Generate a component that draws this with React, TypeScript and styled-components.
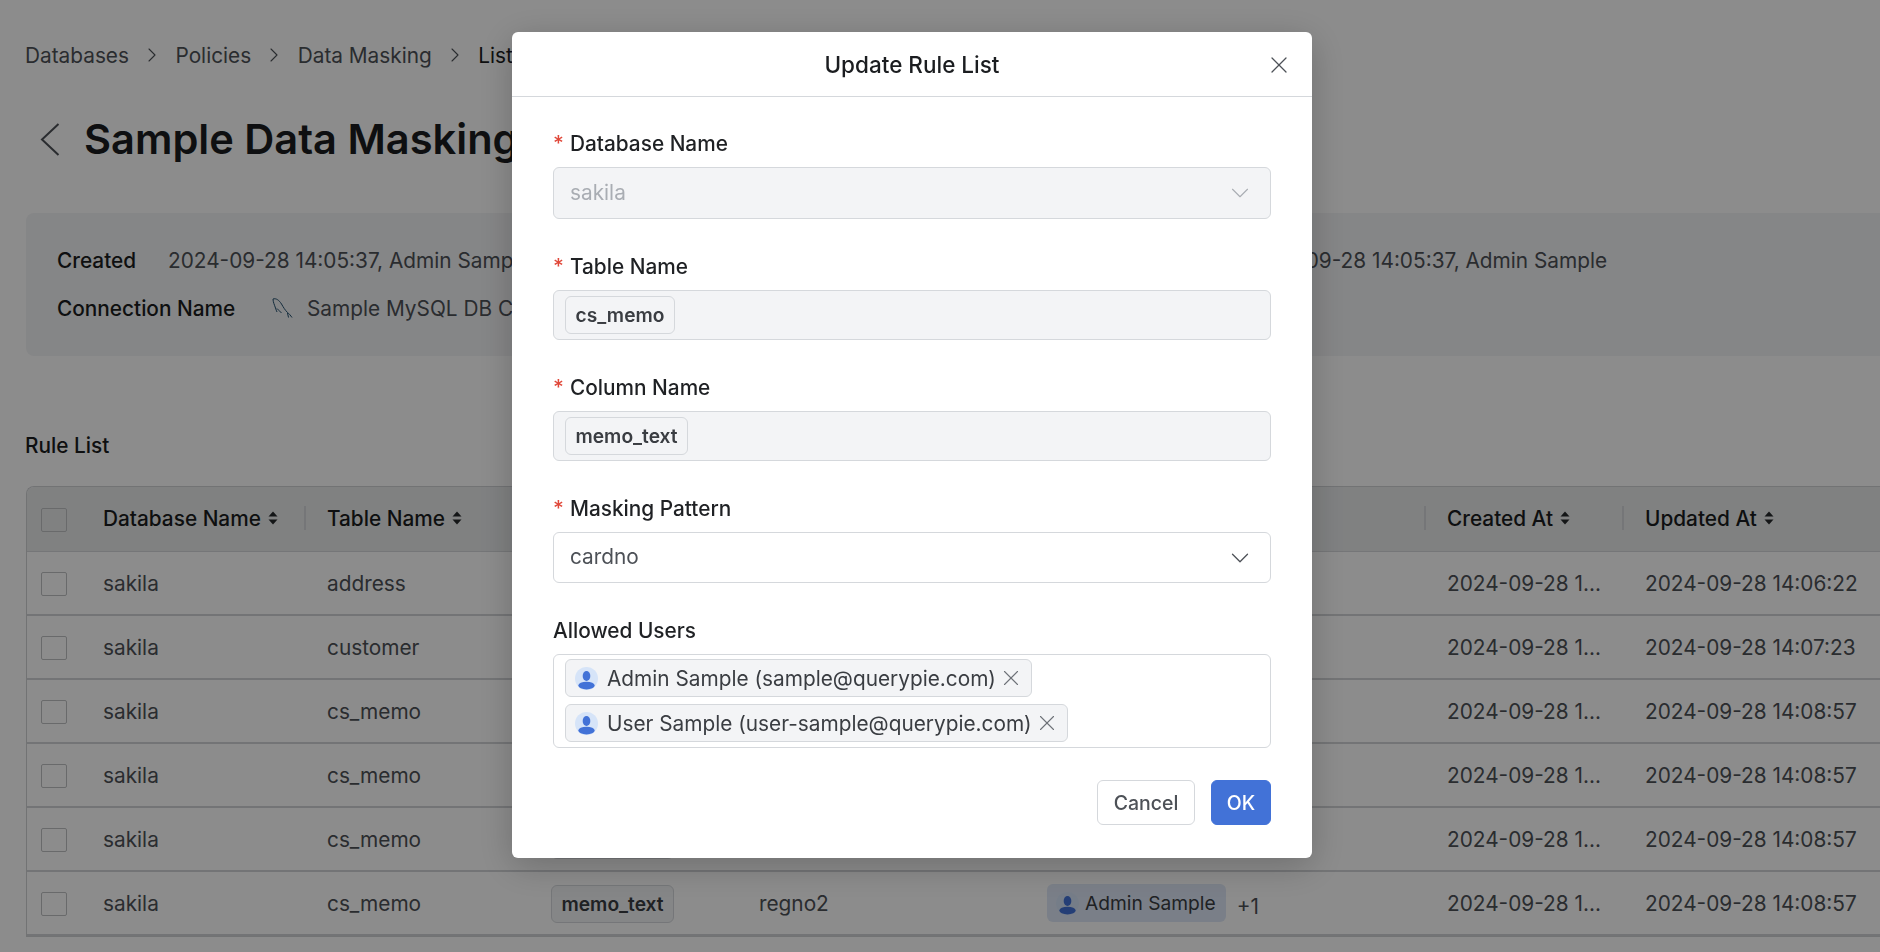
import React from "react";
import styled, { createGlobalStyle } from "styled-components";
import { ChevronDown, ChevronRight, X } from "lucide-react";

const Global = createGlobalStyle`
  html, body { margin: 0; padding: 0; background: #fff; }
  body { font-family: Inter, "Noto Sans", sans-serif; font-size: 20.8px; color: #1b1d20; }
  * { box-sizing: border-box; }
`;

const Page = styled.div`
  width: 1880px; height: 952px; overflow: hidden; padding: 42px 0 0 26px;
`;
const Crumbs = styled.nav`
  display: flex; align-items: center; height: 26px; color: #4d5157; margin-left: -1px;
`;
const Crumb = styled.span<{ $current?: boolean }>`
  color: ${(p) => (p.$current ? "#1b1d20" : "#4d5157")};
`;
const CrumbSep = styled.span`
  display: inline-flex; width: 46.5px; justify-content: center; color: #4d5157;
`;
const TitleRow = styled.header`
  display: flex; align-items: center; height: 50px; margin-top: 46px; gap: 10px;
`;
const BackButton = styled.span`
  display: inline-flex; width: 48px; justify-content: center; color: #4d5157;
`;
const Title = styled.h1`
  margin: 0; font-size: 41.6px; line-height: 50px; font-weight: 600; white-space: nowrap;
`;
const InfoPanel = styled.section`
  margin-top: 49px; height: 143px; background: #f3f4f6; border-radius: 8px 0 0 8px;
  padding: 28px 0 0 31px; display: grid; grid-template-rows: 38px 38px; row-gap: 10px;
`;
const InfoRow = styled.div`
  display: flex; align-items: center; white-space: nowrap;
`;
const InfoLabel = styled.span<{ $w: number }>`
  width: ${(p) => p.$w}px; font-weight: 500; flex: none;
`;
const InfoValue = styled.span`
  color: #4d5157; display: inline-flex; align-items: center; gap: 14px;
`;
const InfoSecond = styled(InfoValue)`
  margin-left: 714px;
`;
const SectionTitle = styled.h2`
  margin: 77px 0 0 -1px; height: 26px; line-height: 26px; font-size: 20.8px; font-weight: 500;
`;
const Table = styled.div`
  margin-top: 27px; border: 1px solid #cfd1d4; border-right: 0; border-radius: 8px 0 0 0; overflow: hidden;
`;
const Row = styled.div<{ $head?: boolean }>`
  display: grid; grid-template-columns: 53px 224px 224px 208px 288px 400px 198px 260px;
  height: ${(p) => (p.$head ? 65 : 64)}px; align-items: center;
  border-bottom: ${(p) => (p.$head ? "1px solid #d5d7da" : "2px solid #d2d4d7")};
  background: ${(p) => (p.$head ? "#e9ebec" : "transparent")};
`;
const Cell = styled.div`
  margin-top: 1px; padding-left: 23px; padding-right: 21px; white-space: nowrap; overflow: hidden;
  text-overflow: ellipsis; color: #4d5157;
`;
const HeadCell = styled.div<{ $sep?: boolean }>`
  height: 24px; margin-top: -2px; display: flex; align-items: center; gap: 7px; font-weight: 500; color: #1b1d20;
  padding-left: ${(p) => (p.$sep ? 21 : 23)}px;
  white-space: nowrap; border-left: ${(p) => (p.$sep ? "2px solid #d5d7da" : "0")};
`;
const CheckCell = styled.div`
  margin-top: 1px; padding-left: 14px; display: flex; align-items: center;
`;
const Check = styled.span`
  width: 26px; height: 24px; border: 1px solid #bfc1c4; border-radius: 2px; display: block;
`;
const Tag = styled.span`
  display: inline-flex; align-items: center; height: 38px; padding: 0 9.5px; border: 1px solid #d5d8dc;
  border-radius: 6px; font-size: 19.2px; font-weight: 600; color: #3a3d42; background: #f3f4f6; white-space: nowrap;
`;
const UserWrap = styled.div`
  display: flex; align-items: center; padding-left: 23px; white-space: nowrap; color: #4d5157;
`;
const UserChip = styled.span`
  display: inline-flex; align-items: center; height: 38px; padding: 0 10px 0 9px; gap: 6px; font-size: 19.2px;
  border-radius: 6px; background: #dfe8f7; color: #3a3d42;
`;
const More = styled.span`
  margin-left: 11px; padding-top: 6px; color: #4d5157;
`;
const Overlay = styled.div`
  position: fixed; inset: 0; background: rgba(0, 0, 0, 0.45); padding: 32px 0 0 512px;
`;
const Modal = styled.div`
  width: 800px; height: 826px; background: #fff; border-radius: 6px;
  box-shadow: 0 8px 36px rgba(0, 0, 0, 0.22); display: flex; flex-direction: column;
`;
const ModalHeader = styled.div`
  flex: none; height: 65px; display: flex; align-items: center; justify-content: center; position: relative;
  border-bottom: 1px solid #d5d8dc; font-size: 22.5px; font-weight: 500;
`;
const CloseButton = styled.span`
  position: absolute; right: 19px; top: 19px; display: inline-flex; color: #4d5157;
`;
const ModalBody = styled.div`
  padding: 35px 41px 0 41px; display: flex; flex-direction: column; gap: 36px;
`;
const Field = styled.div``;
const Label = styled.div`
  height: 24px; line-height: 24px; margin-bottom: 11px; font-weight: 500; display: flex; color: #1f2124;
`;
const Star = styled.span`
  color: #e0483a; width: 17px; flex: none;
`;
const Select = styled.div<{ $disabled?: boolean; $h: number }>`
  height: ${(p) => p.$h}px; border: 1px solid #d5d8dc; border-radius: 6px; padding: 0 15px 0 16px;
  display: flex; align-items: center; justify-content: space-between;
  background: ${(p) => (p.$disabled ? "#f3f4f6" : "#fff")};
  color: ${(p) => (p.$disabled ? "#a9adb3" : "#4d5157")};
`;
const SelectValue = styled.span`
  margin-top: -2px;
`;
const TagBox = styled.div<{ $h: number }>`
  height: ${(p) => p.$h}px; border: 1px solid #d5d8dc; border-radius: 6px; padding: 0 11px;
  display: flex; align-items: center; background: #f3f4f6;
`;
const UsersBox = styled.div`
  height: 94px; border: 1px solid #d5d8dc; border-radius: 6px; padding: 4px 11px;
  display: flex; flex-direction: column; align-items: flex-start; gap: 7px;
`;
const UserTag = styled.span`
  display: inline-flex; align-items: center; height: 38px; padding: 0 7px 0 9px; gap: 9px;
  border: 1px solid #d5d8dc; border-radius: 6px; background: #f3f4f6; color: #3a3d42; white-space: nowrap;
`;
const TagClose = styled.span`
  display: inline-flex; color: #6d7177; margin-left: -7px;
`;
const Footer = styled.div`
  display: flex; justify-content: flex-end; gap: 16px; margin-top: -4px;
`;
const Button = styled.button<{ $primary?: boolean }>`
  height: 45px; padding: 0; width: ${(p) => (p.$primary ? 60 : 98)}px; font: 500 19.5px Inter, sans-serif;
  border-radius: 6px; border: 1px solid ${(p) => (p.$primary ? "#4272d7" : "#d5d8dc")};
  background: ${(p) => (p.$primary ? "#4272d7" : "#fff")};
  color: ${(p) => (p.$primary ? "#fff" : "#4d5157")};
`;

const Sort = () => (
  <svg width="10" height="14" viewBox="0 0 10 14" fill="#26282b">
    <path d="M5 0.5 9.5 5.5H.5Z" />
    <path d="M5 13.5.5 8.500H9.500Z" />
  </svg>
);
const Back = () => (
  <svg width="20" height="33" viewBox="0 0 20 33" fill="none" stroke="currentColor" strokeWidth="2">
    <path d="M18.500 1 2 16.500 18.500 32" />
  </svg>
);
const Avatar = () => (
  <svg width="23" height="23" viewBox="0 0 24 24">
    <circle cx="12" cy="12" r="12" fill="#d6e4f8" />
    <ellipse cx="12" cy="9.300" rx="4" ry="5.200" fill="#4272d7" />
    <ellipse cx="12" cy="19.400" rx="8.500" ry="4.100" fill="#4272d7" />
  </svg>
);
const Dolphin = () => (
  <svg width="21" height="22" viewBox="0 0 21 22" fill="none" stroke="#23506e" strokeWidth="1">
    <path d="M1 2C4 1 7 3 9.500 7c2 3.500 3.500 6 6 8.500 1.500 1 3 3 4.500 5" />
    <path d="M1 2c0 3 1.500 6 2.500 9 .5 1.500 1 3 1.500 4" />
    <path d="M5 11.500l2 2 2.500 2.500" />
    <path d="M15.500 16l1 4.500" />
  </svg>
);

const rows = [
  ["address", "address", "cardno", "14:06:22"],
  ["customer", "email", "email", "14:07:23"],
  ["cs_memo", "memo_text", "regno", "14:08:57"],
  ["cs_memo", "memo_text", "regno", "14:08:57"],
  ["cs_memo", "memo_text", "regno2", "14:08:57"],
  ["cs_memo", "memo_text", "regno2", "14:08:57"],
];
const heads = ["Database Name", "Table Name", "Column Name", "Masking Pattern", "Allowed Users", "Created At", "Updated At"];
const noSort = ["Allowed Users"];
const sepAt = ["Table Name", "Column Name", "Masking Pattern", "Allowed Users", "Created At", "Updated At"];

export default function App() {
  return (
    <>
      <Global />
      <Page>
        <Crumbs>
          <Crumb>Databases</Crumb>
          <CrumbSep><ChevronRight size={24} strokeWidth={1.1} /></CrumbSep>
          <Crumb>Policies</Crumb>
          <CrumbSep><ChevronRight size={24} strokeWidth={1.1} /></CrumbSep>
          <Crumb>Data Masking</Crumb>
          <CrumbSep><ChevronRight size={24} strokeWidth={1.1} /></CrumbSep>
          <Crumb $current>List</Crumb>
        </Crumbs>
        <TitleRow>
          <BackButton><Back /></BackButton>
          <Title>Sample Data Masking Policy</Title>
        </TitleRow>
        <InfoPanel>
          <InfoRow>
            <InfoLabel $w={111}>Created</InfoLabel>
            <InfoValue>2024-09-28 14:05:37, Admin Sample</InfoValue>
            <InfoSecond>2024-09-28 14:05:37, Admin Sample</InfoSecond>
          </InfoRow>
          <InfoRow>
            <InfoLabel $w={215}>Connection Name</InfoLabel>
            <InfoValue><Dolphin />Sample MySQL DB Connection</InfoValue>
          </InfoRow>
        </InfoPanel>
        <SectionTitle>Rule List</SectionTitle>
        <Table>
          <Row $head>
            <CheckCell><Check /></CheckCell>
            {heads.map((h) => (
              <HeadCell key={h} $sep={sepAt.includes(h)}>
                {h}
                {!noSort.includes(h) && <Sort />}
              </HeadCell>
            ))}
          </Row>
          {rows.map((r, i) => (
            <Row key={i}>
              <CheckCell><Check /></CheckCell>
              <Cell>sakila</Cell>
              <Cell>{r[0]}</Cell>
              <Cell><Tag>{r[1]}</Tag></Cell>
              <Cell>{r[2]}</Cell>
              <UserWrap>
                <UserChip><Avatar />Admin Sample</UserChip>
                <More>+1</More>
              </UserWrap>
              <Cell>2024-09-28 14:05:37</Cell>
              <Cell>2024-09-28 {r[3]}</Cell>
            </Row>
          ))}
        </Table>
      </Page>
      <Overlay>
        <Modal>
          <ModalHeader>
            Update Rule List
            <CloseButton><X size={28} strokeWidth={1.1} /></CloseButton>
          </ModalHeader>
          <ModalBody>
            <Field>
              <Label><Star>*</Star>Database Name</Label>
              <Select $disabled $h={52}><SelectValue>sakila</SelectValue><ChevronDown size={30} strokeWidth={0.9} /></Select>
            </Field>
            <Field>
              <Label><Star>*</Star>Table Name</Label>
              <TagBox $h={50}><Tag>cs_memo</Tag></TagBox>
            </Field>
            <Field>
              <Label><Star>*</Star>Column Name</Label>
              <TagBox $h={50}><Tag>memo_text</Tag></TagBox>
            </Field>
            <Field>
              <Label><Star>*</Star>Masking Pattern</Label>
              <Select $h={51}><SelectValue>cardno</SelectValue><ChevronDown size={30} strokeWidth={1.05} /></Select>
            </Field>
            <Field>
              <Label>Allowed Users</Label>
              <UsersBox>
                <UserTag>
                  <Avatar />Admin Sample (sample@querypie.com)
                  <TagClose><X size={26} strokeWidth={1} /></TagClose>
                </UserTag>
                <UserTag>
                  <Avatar />User Sample (user-sample@querypie.com)
                  <TagClose><X size={26} strokeWidth={1} /></TagClose>
                </UserTag>
              </UsersBox>
            </Field>
            <Footer>
              <Button>Cancel</Button>
              <Button $primary>OK</Button>
            </Footer>
          </ModalBody>
        </Modal>
      </Overlay>
    </>
  );
}
